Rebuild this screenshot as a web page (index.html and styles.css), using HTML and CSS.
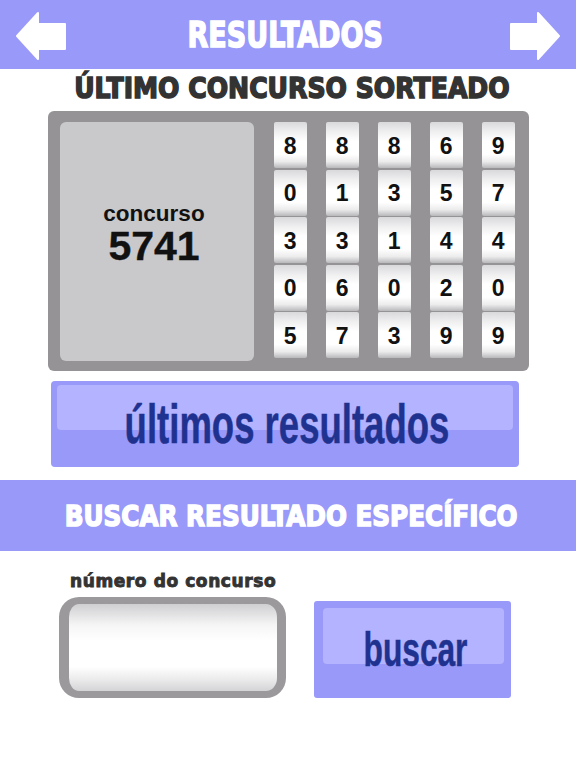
FILE: index.html
```html
<!DOCTYPE html>
<html lang="en">
<head>
  <meta charset="UTF-8" />
  <meta name="viewport" content="width=device-width, initial-scale=1.0"/>
  <title>Resultados</title>
  <link rel="stylesheet" href="styles.css">
</head>
<body>

<header class="top-bar">
  <svg class="arrow" viewBox="0 0 52 50"><path d="M2 25 L23 2 V13 H50 V38 H23 V48 Z"/></svg>
  <h1>RESULTADOS</h1>
  <svg class="arrow" viewBox="0 0 52 50"><path d="M50 25 L29 2 V13 H2 V38 H29 V48 Z"/></svg>
</header>

<h2 class="last-title">ÚLTIMO CONCURSO SORTEADO</h2>

<div class="panel">
  <div class="contest-card">
    <span class="contest-label">concurso</span>
    <span class="contest-number">5741</span>
  </div>
  <div class="digits">
    <div class="digit">8</div><div class="digit">8</div><div class="digit">8</div><div class="digit">6</div><div class="digit">9</div>
    <div class="digit">0</div><div class="digit">1</div><div class="digit">3</div><div class="digit">5</div><div class="digit">7</div>
    <div class="digit">3</div><div class="digit">3</div><div class="digit">1</div><div class="digit">4</div><div class="digit">4</div>
    <div class="digit">0</div><div class="digit">6</div><div class="digit">0</div><div class="digit">2</div><div class="digit">0</div>
    <div class="digit">5</div><div class="digit">7</div><div class="digit">3</div><div class="digit">9</div><div class="digit">9</div>
  </div>
</div>

<button class="big-button" type="button"><span>últimos resultados</span></button>

<div class="search-bar">
  <h2>BUSCAR RESULTADO ESPECÍFICO</h2>
</div>

<form class="search-form">
  <div class="field">
    <label for="numero">número do concurso</label>
    <input type="text" id="numero" name="numero">
  </div>
  <button class="search-button" type="button"><span>buscar</span></button>
</form>

</body>
</html>
```

FILE: styles.css
```css
body {
  margin: 0;
  height: 768px;
  overflow: hidden;
  background: #fff;
  font-family: "Liberation Sans", Arial, sans-serif;
  color: #111;
}

h1, h2 {
  margin: 0;
  font-family: "DejaVu Sans", sans-serif;
  font-weight: bold;
  white-space: nowrap;
}

.top-bar {
  height: 69px;
  background: #9999fa;
  display: flex;
  align-items: center;
  justify-content: space-between;
  padding: 0 15px;
}

.top-bar h1 {
  margin-right: 6px;
  color: #fff;
  font-size: 36px;
  -webkit-text-stroke: 1.6px #fff;
  transform: scaleX(0.75);
}

.arrow {
  width: 52px;
  height: 50px;
  margin-top: 2px;
  fill: #fff;
  stroke: #fff;
  stroke-width: 2;
  stroke-linejoin: round;
}

.last-title {
  height: 42px;
  padding-left: 9px;
  line-height: 38px;
  text-align: center;
  color: #333;
  font-size: 29px;
  -webkit-text-stroke: 1.6px #333;
  transform: scaleX(0.868);
}

.panel {
  width: 457px;
  height: 239px;
  margin-left: 48px;
  padding: 11px 12px 10px 12px;
  background: #959396;
  border-radius: 6px;
  display: flex;
  gap: 19.5px;
}

.contest-card {
  width: 194px;
  background: #c9c8cb;
  border-radius: 6px;
  display: flex;
  flex-direction: column;
  align-items: center;
  justify-content: center;
  padding: 0 6px 13px 0;
  box-sizing: border-box;
  font-weight: bold;
}

.contest-label {
  font-size: 22.5px;
  line-height: 22px;
}

.contest-number {
  font-size: 41px;
  line-height: 42px;
  -webkit-text-stroke: 0.4px #111;
}

.digits {
  display: grid;
  grid-template-columns: repeat(5, 33.5px);
  grid-auto-rows: 46px;
  column-gap: 18.5px;
  row-gap: 1.6px;
}

.digit {
  display: flex;
  align-items: center;
  justify-content: center;
  box-sizing: border-box;
  padding-top: 2px;
  font-size: 23px;
  font-weight: bold;
  border-radius: 2px;
  background: linear-gradient(#d9d8db 0%, #f0f0f1 22%, #fff 42%, #fff 70%, #ececed 86%, #b8b7ba 100%);
}

.big-button {
  display: block;
  position: relative;
  width: 468px;
  height: 86px;
  margin: 10px 0 13px 51px;
  padding: 0;
  border: none;
  border-radius: 4px;
  background: #9999fa;
  font-family: "Liberation Sans", sans-serif;
  font-weight: bold;
  color: #1f3290;
  overflow: hidden;
}

.big-button::before {
  content: "";
  position: absolute;
  top: 4px; left: 6px; right: 6px;
  height: 45px;
  background: #b3b3ff;
  border-radius: 4px;
}

.big-button span {
  display: block;
  position: relative;
  left: -5px;
  font-size: 55px;
  line-height: 86px;
  white-space: nowrap;
  -webkit-text-stroke: 0.5px #1f3290;
  transform: scaleX(0.664);
}

.search-bar {
  height: 71px;
  padding-left: 6px;
  background: #9999fa;
  display: flex;
  align-items: center;
  justify-content: center;
}

.search-bar h2 {
  color: #fff;
  font-size: 29px;
  -webkit-text-stroke: 1.6px #fff;
  transform: scaleX(0.851);
}

.search-form {
  display: flex;
  align-items: flex-end;
  gap: 28px;
  margin: 20px 0 0 59px;
}

.field label {
  display: block;
  margin: 0 0 6px 11px;
  height: 20px;
  font-family: "DejaVu Sans", sans-serif;
  font-weight: bold;
  font-size: 17px;
  letter-spacing: 0.6px;
  line-height: 20px;
  color: #333;
  -webkit-text-stroke: 0.9px #333;
  white-space: nowrap;
}

.field input {
  display: block;
  width: 208px;
  height: 87px;
  padding: 0;
  border: solid #9b999c;
  border-width: 7px 9px 7px 10px;
  border-radius: 20px;
  background: linear-gradient(#cfcfd1 0%, #f5f5f6 24%, #fff 42%, #fff 72%, #ececed 86%, #d4d4d6 100%);
}

.search-button {
  position: relative;
  width: 197px;
  height: 97px;
  padding: 0;
  border: none;
  border-radius: 3px;
  background: #9999fa;
  font-family: "Liberation Sans", sans-serif;
  font-weight: bold;
  color: #1f3290;
}

.search-button::before {
  content: "";
  position: absolute;
  top: 7px; left: 9px; right: 7px;
  height: 56px;
  background: #b3b3ff;
  border-radius: 4px;
}

.search-button span {
  display: block;
  position: relative;
  left: 3px;
  font-size: 48px;
  -webkit-text-stroke: 0.5px #1f3290;
  transform: scaleX(0.66);
}
```
